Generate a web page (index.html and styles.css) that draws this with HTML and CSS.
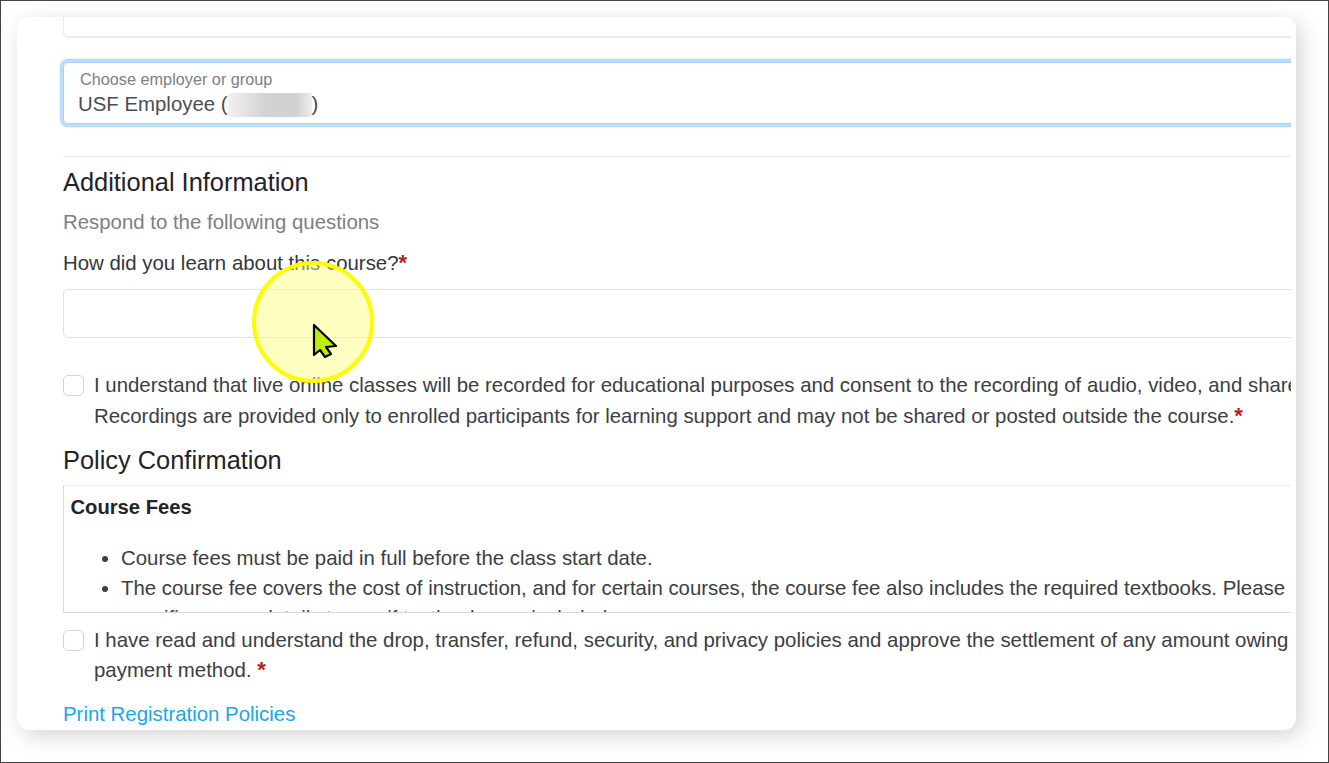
FILE: index.html
```html
<!DOCTYPE html>
<html lang="en">
<head>
<meta charset="utf-8">
<title>Registration</title>
<link rel="stylesheet" href="styles.css">
</head>
<body>
<div class="frame">
  <main class="card">
    <div class="content">
      <div class="prev-field"></div>
      <div class="select-field">
        <div class="select-label">Choose employer or group</div>
        <div class="select-value">USF Employee (<span class="redact"></span>)</div>
      </div>
      <hr class="divider">
      <h2 class="heading first">Additional Information</h2>
      <p class="muted">Respond to the following questions</p>
      <label class="question">How did you learn about this course?<span class="req">*</span></label>
      <div class="text-input"></div>
      <div class="check-row consent">
        <span class="checkbox"></span>
        <p class="check-text">I understand that live online classes will be recorded for educational purposes and consent to the recording of audio, video, and shared content.<br>Recordings are provided only to enrolled participants for learning support and may not be shared or posted outside the course.<span class="req">*</span></p>
      </div>
      <h2 class="heading second">Policy Confirmation</h2>
      <div class="policy-box">
        <strong class="policy-title">Course Fees</strong>
        <ul class="policy-list">
          <li>Course fees must be paid in full before the class start date.</li>
          <li>The course fee covers the cost of instruction, and for certain courses, the course fee also includes the required textbooks. Please check the<br>specific course details to see if textbooks are included.</li>
        </ul>
      </div>
      <div class="check-row agree">
        <span class="checkbox"></span>
        <p class="check-text tight">I have read and understand the drop, transfer, refund, security, and privacy policies and approve the settlement of any amount owing to my<br>payment method. <span class="req">*</span></p>
      </div>
      <a class="print-link" href="#">Print Registration Policies</a>
    </div>
  </main>
  <div class="spotlight">
    <svg class="pointer" viewBox="0 0 26 38" width="26" height="38" aria-hidden="true">
      <path d="M2 2 L2 32 L8 27 L13 34 L19 31 L14 24 L24 23 Z" fill="#bdf000" stroke="#000" stroke-width="2.2" stroke-linejoin="round"/>
    </svg>
  </div>
</div>
</body>
</html>
```
FILE: styles.css
```css
* { box-sizing: border-box; }
html, body { margin: 0; padding: 0; height: 100%; }
body {
  background: #fff;
  font-family: "Liberation Sans", Arial, sans-serif;
  color: #373a3f;
}
.frame {
  position: relative;
  width: 1329px;
  height: 763px;
  border: 1px solid #444;
  padding: 16px 32px 32px 16px;
  overflow: hidden;
}
.card {
  height: 713px;
  width: 1279px;
  background: #fff;
  border-radius: 12px;
  box-shadow: 5px 6px 22px rgba(0, 0, 0, 0.17);
  padding: 0 5px 0 40px;
  overflow: hidden;
}
.content {
  width: 1234px;
  height: 713px;
  padding-left: 6px;
  overflow: hidden;
  white-space: nowrap;
  font-size: 20.4px;
}
.prev-field {
  height: 21px;
  border: 0 solid #ebebee;
  border-width: 0 0 2px 1px;
  border-radius: 0 0 0 6px;
}
.select-field {
  width: 1240px;
  height: 62px;
  margin-top: 24px;
  border: 1px solid #a9d0fb;
  border-radius: 5px;
  box-shadow: 0 0 0 3px #bcdcfd, 0 0 1px 4px #e6f2fe;
  padding: 7px 14px;
}
.select-label { font-size: 16.25px; line-height: 19px; color: #7c8084; margin-left: 2px; }
.select-value { font-size: 20.4px; line-height: 26px; color: #4a4e53; margin-top: 2px; }
.redact {
  display: inline-block;
  width: 84px;
  height: 24px;
  vertical-align: -6px;
  background: linear-gradient(90deg, #f1f1f1 0%, #d2d3d4 45%, #cfd0d1 80%, #eeeeee 100%);
  border-radius: 3px;
}
.divider {
  border: 0;
  height: 1px;
  background: #e9eaec;
  margin: 32px 0 0;
}
.heading {
  margin: 0;
  font-weight: 400;
  font-size: 25.4px;
  line-height: 30px;
  color: #1f2328;
}
.heading.first { margin-top: 10px; }
.muted { margin: 13px 0 0; font-size: 20.4px; line-height: 24px; color: #7b7f84; }
.question { display: block; margin-top: 17px; font-size: 20.4px; line-height: 24px; color: #33373c; }
.req { color: #b81c1c; font-weight: 700; font-size: 22px; line-height: 0; }
.text-input {
  width: 1240px;
  height: 49px;
  margin-top: 14px;
  border: 1px solid #dfe1e5;
  border-radius: 5px;
}
.check-row { display: flex; align-items: flex-start; gap: 10px; }
.consent { margin-top: 32px; }
.checkbox {
  flex: none;
  width: 21px;
  height: 21px;
  margin-top: 5px;
  border: 1px solid #cfd4da;
  border-radius: 5px;
  background: #fff;
}
.check-text { margin: 0; font-size: 20.4px; line-height: 30.5px; color: #3b3e43; }
.check-text.tight { line-height: 30px; }
.heading.second { margin-top: 14px; }
.policy-box {
  height: 128px;
  margin-top: 10px;
  border: 1px solid #d8d9db;
  border-right: 0;
  padding: 8px 6.5px;
  overflow: hidden;
  border-top-color: #eceded;
}
.policy-title { display: block; font-size: 20.2px; line-height: 26px; color: #212529; }
.policy-list { margin: 23px 0 0; padding: 0 0 0 50.5px; }
.policy-list li { font-size: 20.4px; line-height: 30px; color: #3b3e43; }
.agree { margin-top: 12px; }
.print-link {
  display: block;
  margin-top: 16px;
  font-size: 20.4px;
  line-height: 26px;
  color: #1da6e6;
  text-decoration: none;
}
.spotlight {
  position: absolute;
  left: 251px;
  top: 260px;
  width: 122px;
  height: 122px;
  border-radius: 50%;
  border: 4px solid #fdfd00;
  background: rgba(255, 255, 120, 0.45);
}
.pointer { position: absolute; left: 56px; top: 58px; }
```
